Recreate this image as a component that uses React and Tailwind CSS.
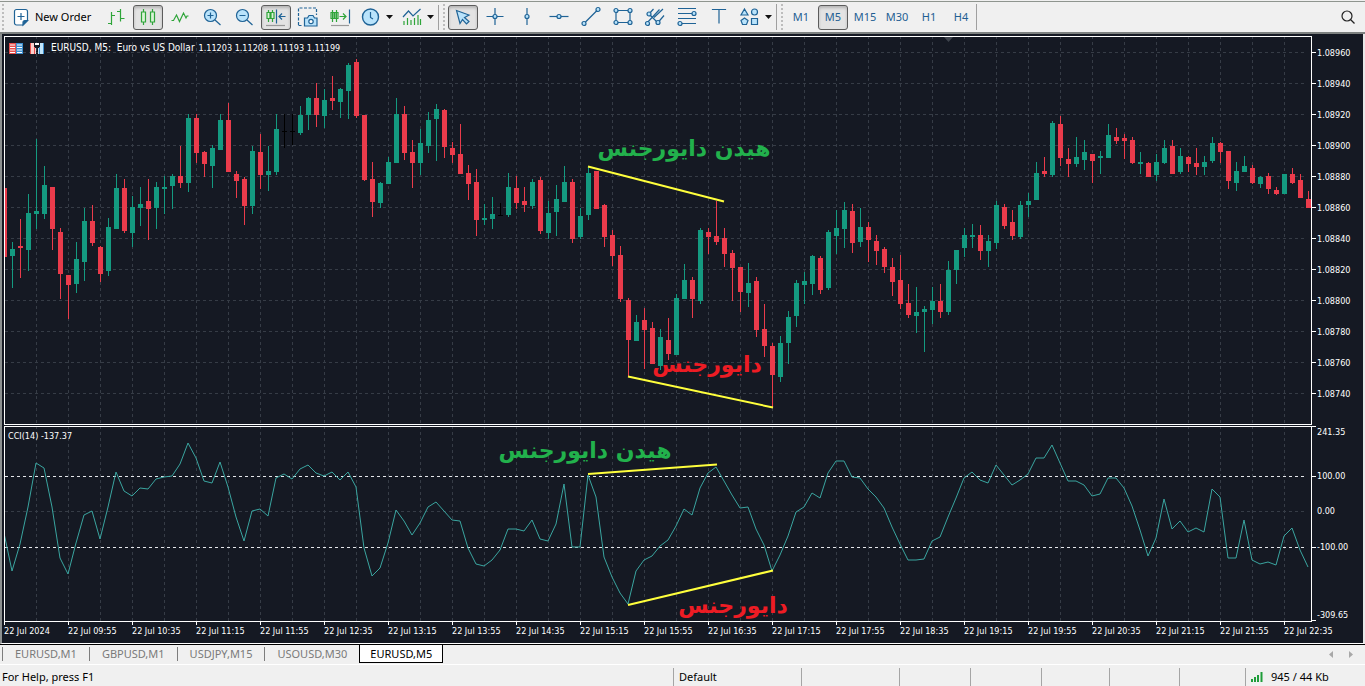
import React from "react";

const UP = "#149a80";
const DOWN = "#ea3b4b";
const STEP = 8;

// [direction, high, body top, body bottom, low]
const CANDLES = [
    ["d", 188, 188, 257, 257], ["u", 242, 249, 256, 288], ["d", 219, 246, 248, 278], ["u", 194, 213, 250, 271],
    ["u", 139, 211, 214, 229], ["u", 166, 185, 214, 219], ["d", 187, 187, 229, 250], ["d", 228, 232, 274, 299],
    ["d", 275, 275, 285, 319], ["u", 242, 259, 284, 293], ["u", 208, 221, 262, 281], ["d", 205, 221, 243, 246],
    ["d", 246, 247, 274, 282], ["u", 218, 227, 271, 276], ["u", 174, 188, 229, 229], ["d", 179, 188, 231, 233],
    ["u", 196, 207, 233, 247], ["u", 187, 204, 208, 226], ["d", 179, 201, 209, 240], ["u", 182, 187, 208, 229],
    ["u", 176, 187, 189, 214], ["u", 174, 176, 186, 209], ["d", 146, 176, 183, 188], ["u", 114, 118, 183, 192],
    ["d", 114, 118, 153, 163], ["d", 151, 152, 164, 177], ["u", 145, 148, 166, 188], ["u", 114, 120, 150, 150],
    ["d", 103, 120, 172, 172], ["d", 171, 174, 181, 198], ["d", 177, 179, 206, 225], ["u", 146, 151, 206, 214],
    ["d", 134, 152, 175, 189], ["u", 146, 171, 175, 191], ["u", 114, 129, 172, 175], ["x", 114, 131, 132, 148],
    ["x", 114, 131, 132, 145], ["u", 106, 115, 133, 135], ["u", 97, 98, 115, 130], ["d", 83, 98, 115, 127],
    ["u", 89, 100, 116, 128], ["d", 76, 98, 101, 110], ["u", 88, 89, 102, 118], ["u", 63, 65, 91, 119],
    ["d", 59, 62, 116, 118], ["d", 115, 115, 180, 181], ["d", 162, 179, 202, 217], ["u", 182, 183, 203, 208],
    ["u", 157, 162, 184, 184], ["u", 98, 114, 163, 163], ["d", 106, 114, 153, 160], ["d", 140, 152, 163, 188],
    ["u", 129, 143, 163, 175], ["u", 112, 120, 146, 153], ["u", 104, 109, 119, 161], ["d", 109, 110, 147, 158],
    ["d", 142, 148, 155, 163], ["d", 124, 154, 174, 174], ["d", 165, 173, 184, 200], ["d", 169, 182, 220, 236],
    ["u", 204, 218, 220, 225], ["u", 197, 214, 219, 229], ["x", 203, 215, 216, 216], ["u", 173, 187, 215, 217],
    ["d", 176, 188, 203, 209], ["d", 187, 201, 205, 212], ["u", 179, 182, 206, 209], ["d", 177, 180, 231, 234],
    ["u", 201, 213, 233, 239], ["u", 185, 199, 212, 236], ["u", 166, 182, 202, 202], ["d", 179, 182, 239, 243],
    ["u", 208, 216, 237, 239], ["u", 167, 173, 215, 220], ["d", 171, 171, 209, 209], ["d", 204, 205, 237, 247],
    ["d", 230, 235, 256, 266], ["d", 246, 255, 299, 302], ["d", 298, 300, 340, 376], ["u", 315, 322, 341, 341],
    ["d", 308, 320, 330, 369], ["d", 322, 328, 364, 364], ["u", 329, 337, 366, 370], ["d", 318, 340, 354, 360],
    ["u", 294, 298, 355, 355], ["u", 264, 280, 299, 299], ["d", 277, 280, 299, 318], ["u", 228, 230, 301, 304],
    ["d", 228, 232, 237, 254], ["d", 201, 236, 242, 245], ["d", 228, 238, 254, 267], ["d", 250, 253, 268, 301],
    ["d", 267, 267, 292, 312], ["u", 263, 283, 293, 307], ["d", 277, 281, 330, 337], ["d", 304, 329, 346, 357],
    ["d", 343, 346, 375, 407], ["u", 336, 343, 377, 382], ["u", 311, 317, 343, 364], ["u", 280, 283, 316, 327],
    ["u", 272, 281, 285, 304], ["u", 255, 256, 284, 295], ["d", 256, 258, 290, 294], ["u", 230, 232, 288, 290],
    ["u", 210, 228, 236, 254], ["u", 202, 210, 229, 248], ["d", 204, 211, 243, 253], ["u", 208, 227, 242, 247],
    ["d", 222, 227, 240, 262], ["d", 235, 241, 251, 265], ["d", 247, 249, 267, 273], ["d", 258, 267, 282, 296],
    ["d", 255, 280, 304, 309], ["d", 284, 303, 315, 318], ["u", 287, 312, 316, 333], ["u", 306, 309, 312, 352],
    ["u", 287, 301, 310, 324], ["d", 284, 301, 312, 318], ["u", 261, 270, 312, 315], ["u", 250, 250, 270, 284],
    ["u", 228, 235, 248, 257], ["u", 224, 235, 237, 248], ["d", 225, 235, 251, 260], ["u", 235, 241, 251, 267],
    ["u", 201, 205, 243, 249], ["d", 204, 207, 226, 229], ["d", 210, 222, 236, 240], ["u", 201, 205, 237, 239],
    ["u", 193, 201, 205, 217], ["u", 162, 173, 200, 200], ["d", 157, 171, 174, 177], ["u", 121, 123, 175, 177],
    ["d", 116, 124, 158, 166], ["d", 148, 159, 164, 177], ["u", 137, 157, 164, 167], ["u", 140, 152, 160, 170],
    ["d", 154, 154, 161, 183], ["u", 151, 156, 158, 174], ["u", 124, 135, 158, 158], ["d", 128, 137, 141, 144],
    ["d", 134, 138, 141, 159], ["d", 137, 140, 163, 164], ["u", 152, 162, 164, 174], ["d", 162, 163, 177, 177],
    ["u", 154, 162, 175, 181], ["u", 140, 148, 163, 164], ["d", 140, 146, 174, 174], ["u", 148, 156, 172, 174],
    ["d", 156, 157, 164, 172], ["d", 148, 163, 167, 175], ["u", 156, 162, 167, 175], ["u", 137, 143, 161, 163],
    ["d", 142, 143, 152, 163], ["d", 151, 151, 181, 189], ["u", 162, 171, 183, 191], ["u", 156, 166, 172, 172],
    ["d", 165, 168, 183, 184], ["u", 176, 177, 184, 188], ["d", 173, 176, 189, 194], ["d", 187, 190, 194, 195],
    ["u", 174, 174, 194, 194], ["d", 168, 174, 183, 184], ["d", 174, 180, 198, 198], ["d", 191, 199, 208, 208],
];

const CCI = [
    533, 571, 544, 507, 463, 468, 507, 558, 574, 543, 515, 511, 539, 507, 472, 491, 496, 488, 489, 479,
    477, 476, 464, 443, 458, 481, 483, 462, 487, 517, 541, 511, 509, 516, 478, 474, 479, 469, 465, 473,
    476, 472, 480, 472, 487, 548, 576, 568, 543, 510, 521, 535, 523, 507, 502, 511, 520, 521, 548, 564,
    566, 560, 550, 529, 529, 531, 520, 539, 541, 524, 484, 547, 547, 475, 497, 557, 577, 593, 604, 571,
    560, 556, 546, 540, 526, 509, 515, 488, 473, 467, 481, 495, 508, 507, 529, 545, 571, 555, 536, 512,
    507, 493, 498, 473, 461, 461, 477, 478, 489, 497, 508, 527, 544, 560, 560, 559, 541, 537, 517, 498,
    478, 472, 480, 483, 465, 475, 485, 480, 474, 458, 458, 445, 463, 481, 481, 485, 496, 494, 478, 478,
    488, 506, 530, 556, 538, 499, 529, 521, 532, 528, 532, 489, 497, 558, 558, 520, 560, 564, 562, 565,
    536, 528, 550, 567,
];

const PRICES = [
    "1.08960", "1.08940", "1.08920", "1.08900", "1.08880", "1.08860",
    "1.08840", "1.08820", "1.08800", "1.08780", "1.08760", "1.08740",
];

const TIMES = [
    "22 Jul 2024", "22 Jul 09:55", "22 Jul 10:35", "22 Jul 11:15", "22 Jul 11:55", "22 Jul 12:35", "22 Jul 13:15",
    "22 Jul 13:55", "22 Jul 14:35", "22 Jul 15:15", "22 Jul 15:55", "22 Jul 16:35", "22 Jul 17:15", "22 Jul 17:55",
    "22 Jul 18:35", "22 Jul 19:15", "22 Jul 19:55", "22 Jul 20:35", "22 Jul 21:15", "22 Jul 21:55", "22 Jul 22:35",
];

const TABS = ["EURUSD,M1", "GBPUSD,M1", "USDJPY,M15", "USOUSD,M30", "EURUSD,M5"];

const BLUE = "#1f6396";
const GREEN = "#2fa53a";
const SKY = "#b9e3fb";

function Icon({ children }) {
    return (
        <svg width="24" height="24" viewBox="0 0 24 24" fill="none" strokeWidth="1.2" className="shrink-0">
            {children}
        </svg>
    );
}

function Dot({ x, y }) {
    return <circle cx={x} cy={y} r="2" fill={SKY} stroke={BLUE} />;
}

const icons = {
    newOrder: (
        <Icon>
            <path d="M7.5 4.500h9a2 2 0 0 1 2 2v9l-4.500 4.500h-6.500a2 2 0 0 1-2-2v-11.500a2 2 0 0 1 2-2z" fill="#fff" stroke={BLUE} />
            <path d="M14 20v-2.500a2 2 0 0 1 2-2h2.500z" fill={BLUE} stroke={BLUE} />
            <path d="M12 8v7M8.500 11.500h7" stroke={BLUE} />
        </Icon>
    ),
    bars: (
        <Icon>
            <path d="M7.500 7v13M4 18.500h3.500M7.500 10.500h3.500M16.500 4v12.500M13 6.500h3.500M16.500 13.500h4" stroke={GREEN} />
        </Icon>
    ),
    candles: (
        <Icon>
            <path d="M7.500 4v3M7.500 17v3M16.500 4v3M16.500 17v3" stroke={GREEN} />
            <path d="M5.500 7h4v10h-4zM14.500 7h4v10h-4z" stroke={GREEN} fill="#d9f3d6" />
        </Icon>
    ),
    line: (
        <Icon>
            <path d="M3.500 15.500h2l3-5.500 3 6.500 4-8.500 2.500 5 1-2h1.500" stroke={GREEN} />
        </Icon>
    ),
    zoomIn: (
        <Icon>
            <circle cx="10.500" cy="10.500" r="6" fill={SKY} stroke={BLUE} />
            <path d="M15 15l5.500 5M10.500 7.500v6M7.500 10.500h6" stroke={BLUE} />
        </Icon>
    ),
    zoomOut: (
        <Icon>
            <circle cx="10.500" cy="10.500" r="6" fill={SKY} stroke={BLUE} />
            <path d="M15 15l5.500 5M7.500 10.500h6" stroke={BLUE} />
        </Icon>
    ),
    autoScroll: (
        <Icon>
            <path d="M4.500 5v12M8.500 5v12" stroke={GREEN} />
            <path d="M3 7.500h3v6h-3zM7 7.500h3v6h-3z" stroke={GREEN} fill="#d9f3d6" />
            <path d="M12.500 4.500v14M21.500 11.500h-6M18 8.500l-3 3 3 3" stroke={BLUE} />
            <path d="M2 20.500h19" stroke="#9a9a9a" />
        </Icon>
    ),
    camera: (
        <Icon>
            <path d="M2.500 20v-17h18v7M2.500 20.500h4" stroke={BLUE} strokeDasharray="3 1.500" />
            <path d="M8.500 13h3l1.500-2.500h4l1.500 2.500h2.500v8h-12.500z" fill={SKY} stroke={BLUE} />
            <circle cx="15" cy="16.500" r="2.200" stroke={BLUE} fill="#fff" />
        </Icon>
    ),
    shift: (
        <Icon>
            <path d="M4.500 5v12M8.500 5v12" stroke={GREEN} />
            <path d="M3 7.500h3v6h-3zM7 7.500h3v6h-3zM11.500 11.500h6M15 8.500l3 3-3 3" stroke={GREEN} />
            <path d="M21.500 4.500v14" stroke={BLUE} />
            <path d="M3 20.500h18" stroke="#9a9a9a" />
        </Icon>
    ),
    clock: (
        <Icon>
            <circle cx="11.500" cy="12" r="8" fill={SKY} stroke={BLUE} strokeWidth="1.400" />
            <path d="M11.500 7v5.500l2.500 1.500" stroke={BLUE} />
        </Icon>
    ),
    indicators: (
        <Icon>
            <path d="M3 12l5.500-6 4.500 5 7.500-7" stroke={BLUE} />
            <path d="M4 16v4M7.500 13v7M11 15v5M14.500 13v7M18 10v10M20.500 14v6" stroke={GREEN} />
        </Icon>
    ),
    cursor: (
        <Icon>
            <path d="M5.500 5.500l12.500 4.500-4.500 2.500 4.500 4-2.500 2.500-4-4.500-2.500 4z" fill={SKY} stroke={BLUE} />
        </Icon>
    ),
    cross: (
        <Icon>
            <path d="M12 3v17M3.500 11.500h17" stroke={BLUE} />
            <Dot x={12} y={11.5} />
        </Icon>
    ),
    vline: (
        <Icon>
            <path d="M12 3v17" stroke={BLUE} />
            <Dot x={12} y={11.5} />
        </Icon>
    ),
    hline: (
        <Icon>
            <path d="M2.500 11.500h19" stroke={BLUE} />
            <Dot x={12} y={11.5} />
        </Icon>
    ),
    trend: (
        <Icon>
            <path d="M5 18.500l14-14" stroke={BLUE} />
            <Dot x={5} y={18.5} />
            <Dot x={19} y={4.5} />
        </Icon>
    ),
    rect: (
        <Icon>
            <path d="M5 5.500h14v12h-14z" stroke={BLUE} />
            <Dot x={5} y={5.5} />
            <Dot x={19} y={5.5} />
            <Dot x={5} y={17.5} />
            <Dot x={19} y={17.5} />
        </Icon>
    ),
    channel: (
        <Icon>
            <path d="M3.500 18.500l13-14M6 9l4.500-5M15 17.500l6-7M11 12.500l9-8.500M6 9l9 9" stroke={BLUE} />
            <Dot x={4.5} y={18.5} />
            <Dot x={6} y={9} />
            <Dot x={15} y={17.5} />
        </Icon>
    ),
    fibo: (
        <Icon>
            <path d="M3 3.500h18M3 8.500h18M3 13.500h18M3 18.500h18" stroke={BLUE} />
            <Dot x={19} y={8.5} />
            <Dot x={5} y={18.5} />
        </Icon>
    ),
    text: (
        <Icon>
            <path d="M5.500 5v-0.500h13v0.500M12 4.500v14" stroke={BLUE} />
        </Icon>
    ),
    shapes: (
        <Icon>
            <path d="M6.500 4l3.500 6h-7zM13.500 13.500h6v6h-6zM6.500 13l3.500 2.500-1.500 4h-4l-1.500-4z" fill={SKY} stroke={BLUE} />
            <circle cx="16.500" cy="7" r="3" fill={SKY} stroke={BLUE} />
        </Icon>
    ),
};

const CHART_TOOLS = [
    ["bars", "Bar chart"], ["candles", "Candlesticks"], ["line", "Line chart"], ["zoomIn", "Zoom in"],
    ["zoomOut", "Zoom out"], ["autoScroll", "Auto scroll"], ["camera", "Screenshot"], ["shift", "Chart shift"],
];

const DRAW_TOOLS = [
    ["cursor", "Cursor"], ["cross", "Crosshair"], ["vline", "Vertical line"], ["hline", "Horizontal line"],
    ["trend", "Trend line"], ["rect", "Rectangle"], ["channel", "Channel"], ["fibo", "Fibonacci"], ["text", "Text"],
];

const PERIODS = ["M1", "M5", "M15", "M30", "H1", "H4"];

const PRESSED = "rounded-[3px] border border-[#5c5c5c] bg-[#e3e3e3] shadow-[inset_0_2px_3px_#b5b5b5]";

function ToolButton({ icon, label, pressed }) {
    return (
        <button
            aria-label={label}
            aria-pressed={pressed}
            className={`flex h-[25px] w-[30px] shrink-0 items-center justify-center ${pressed ? PRESSED : ""}`}
        >
            {icons[icon]}
        </button>
    );
}

function MenuButton({ icon, label }) {
    return (
        <button aria-label={label} className="flex h-[25px] w-9 shrink-0 items-center justify-between pl-[2px]">
            {icons[icon]}
            <svg width="7" height="4" viewBox="0 0 7 4">
                <path d="M0 0h7L3.500 4z" fill="#111" />
            </svg>
        </button>
    );
}

function Grip() {
    return <span className="h-[26px] w-[3px] shrink-0 border-l-2 border-dotted border-[#bdbdbd]" />;
}

function Toolbar() {
    return (
        <header className="mt-px flex h-[33px] shrink-0 items-center border-t border-b-2 border-t-[#8f958f] border-b-[#7d8180] pl-[2px]">
            <Grip />
            <div className="flex items-center gap-[2px] border-r border-[#a0a0a0] pr-1 pl-1">
                <button className="flex h-[25px] w-[90px] shrink-0 items-center gap-[2px] text-black">
                    {icons.newOrder}
                    New Order
                </button>
                {CHART_TOOLS.map(([icon, label]) => (
                    <ToolButton key={icon} icon={icon} label={label} pressed={icon === "candles" || icon === "autoScroll"} />
                ))}
                <div className="flex gap-[5px]">
                    <MenuButton icon="clock" label="Periods" />
                    <MenuButton icon="indicators" label="Indicators" />
                </div>
            </div>
            <div className="flex items-center gap-[2px] border-r border-[#a0a0a0] pr-1 pl-1">
                <Grip />
                {DRAW_TOOLS.map(([icon, label]) => (
                    <ToolButton key={icon} icon={icon} label={label} pressed={icon === "cursor"} />
                ))}
                <MenuButton icon="shapes" label="Shapes" />
            </div>
            <div className="flex items-center gap-[2px] border-r border-[#a0a0a0] pl-1">
                <Grip />
                {PERIODS.map((p) => (
                    <button
                        key={p}
                        className={`h-[25px] w-[30px] shrink-0 text-center text-[#1f5f93] ${p === "M5" ? PRESSED : ""}`}
                    >
                        {p}
                    </button>
                ))}
            </div>
            <button aria-label="Search" className="mr-[9px] ml-auto">
                <svg width="16" height="16" viewBox="0 0 16 16" fill="none" stroke="#222" strokeWidth="1.200">
                    <circle cx="7" cy="7" r="5" />
                    <path d="M10.500 10.500l4 4" />
                </svg>
            </button>
        </header>
    );
}

function Columns({ id }) {
    return (
        <>
            <defs>
                <pattern id={id} x="36" y="0" width="32" height="6" patternUnits="userSpaceOnUse">
                    <rect width="1" height="3" fill="#363c46" />
                </pattern>
            </defs>
            <rect x="5" width="100%" height="1200" fill={`url(#${id})`} />
        </>
    );
}

function Level({ y, color, dash = "3 3" }) {
    return (
        <svg x="0" y={y} width="100%" height="1" overflow="visible">
            <line x1="5" x2="100%" y1="0.5" y2="0.5" stroke={color} strokeDasharray={dash} />
        </svg>
    );
}

function Note({ x, y, color, children }) {
    return (
        <text x={x} y={y} fill={color} textAnchor="middle" direction="rtl" className="font-['DejaVu_Sans',sans-serif] text-[22px] font-bold">
            {children}
        </text>
    );
}

function PriceChart() {
    return (
        <svg width="100%" height="100%" className="block">
            <g transform="translate(-5 -37)">
                <Columns id="price-columns" />
                {PRICES.map((p, i) => (
                    <Level key={p} y={52 + i * 31} color="#363c46" />
                ))}
                <path d="M944 37h9l-4.500 5z" fill="#3f444d" />
                <g shapeRendering="crispEdges">
                    {CANDLES.map(([dir, high, top, bottom, low], i) => {
                        const color = dir === "u" ? UP : dir === "d" ? DOWN : "#000";
                        const x = 4 + i * STEP;
                        return (
                            <g key={i} fill={color}>
                                <rect x={x} y={high} width="1" height={low - high} />
                                <rect x={x - 2} y={top} width="5" height={bottom - top} />
                            </g>
                        );
                    })}
                </g>
                <g stroke="#ffff3c" strokeWidth="2">
                    <path d="M588 166.500L724 201.500" />
                    <path d="M628 376.500L773 407.500" />
                </g>
                <Note x={684} y={156} color="#22b14c">هیدن دایورجنس</Note>
                <Note x={707} y={372} color="#ed1c24">دایورجنس</Note>
            </g>
        </svg>
    );
}

function CciChart() {
    const points = CCI.map((y, i) => `${4 + i * STEP},${y}`).join(" ");
    return (
        <svg width="100%" height="100%" className="block">
            <g transform="translate(-5 -427)">
                <Columns id="cci-columns" />
                <Level y={511} color="#363c46" />
                <Level y={476} color="#e4e6ea" />
                <Level y={547} color="#e4e6ea" />
                <polyline points={points} fill="none" stroke="#3aa5a0" />
                <g stroke="#ffff3c" strokeWidth="2">
                    <path d="M588 474L717 464.500" />
                    <path d="M628 605L773 570.500" />
                </g>
                <Note x={585} y={458} color="#22b14c">هیدن دایورجنس</Note>
                <Note x={733} y={613} color="#ed1c24">دایورجنس</Note>
            </g>
        </svg>
    );
}

function AxisLabel({ tick = true, className, children }) {
    return (
        <div className={`flex gap-[1px] ${className}`}>
            <span className={`h-px w-1 ${tick ? "bg-white" : ""}`} />
            {children}
        </div>
    );
}

function ChartWindow() {
    return (
        <main className="flex min-h-0 flex-1 flex-col border-r-2 border-b border-l-2 border-r-[#e8e8e8] border-b-white border-l-[#8c9090] bg-[#151923] pt-[2px] pl-[2px] font-['DejaVu_Sans_Condensed','DejaVu_Sans',sans-serif] text-[9px] leading-3 text-white">
            <div className="flex min-h-0 flex-1">
                <section className="relative min-w-0 flex-1 overflow-hidden border border-white">
                    <PriceChart />
                    <div className="absolute top-[5px] left-1 flex items-center gap-[7px]">
                        <svg width="14" height="11" viewBox="0 0 14 11">
                            <path d="M0 0h7v11H0z" fill="#e8504e" />
                            <path d="M7 0h7v11H7z" fill="#3d8fd0" />
                            <path d="M1 2h5M1 4.500h5M1 7h5M1 9.500h5M8 2h5M8 4.500h5M8 7h5M8 9.500h5" stroke="#fff" />
                        </svg>
                        <svg width="14" height="11" viewBox="0 0 14 11">
                            <path d="M0 0h4v5h2v6H0z" fill="#fbd0cd" />
                            <path d="M14 0h-4v5H8v6h6z" fill="#c2e6fb" />
                            <path d="M0 0h1v11H0zM4 4h1v7H4z" fill="#e8504e" />
                            <path d="M13 0h1v11h-1zM9 4h1v7H9z" fill="#3d8fd0" />
                            <path d="M5 0h4v2H5z" fill="#fff" />
                        </svg>
                        <h1 className="flex items-baseline gap-1 whitespace-pre">
                            <span className="text-[10px]">EURUSD, M5:  Euro vs US Dollar</span>
                            <span>1.11203 1.11208 1.11193 1.11199</span>
                        </h1>
                    </div>
                </section>
                <div className="w-[51px] pt-[1px]">
                    {PRICES.map((p) => (
                        <AxisLabel key={p} className="h-[31px] items-center">{p}</AxisLabel>
                    ))}
                </div>
            </div>
            <div className="mt-px flex h-[196px] shrink-0">
                <section className="relative min-w-0 flex-1 overflow-hidden border border-white">
                    <CciChart />
                    <h2 className="absolute top-[3px] left-[3px]">CCI(14) -137.37</h2>
                </section>
                <div className="w-[51px]">
                    <AxisLabel className="h-3 items-start">241.35</AxisLabel>
                    <AxisLabel className="mt-8 h-3 items-center">100.00</AxisLabel>
                    <AxisLabel tick={false} className="mt-[23px] h-3 items-center">0.00</AxisLabel>
                    <AxisLabel className="mt-6 h-3 items-center">-100.00</AxisLabel>
                    <AxisLabel className="mt-14 h-3 items-end">-309.65</AxisLabel>
                </div>
            </div>
            <div className="flex h-[21px] shrink-0 overflow-hidden">
                {TIMES.map((t) => (
                    <div key={t} className="w-16 shrink-0 whitespace-nowrap">
                        <span className="block h-[3px] w-px bg-white" />
                        {t}
                    </div>
                ))}
            </div>
        </main>
    );
}

function TabBar() {
    return (
        <nav className="flex h-[21px] shrink-0 items-start justify-between border-t border-b border-t-black border-b-white">
            <div className="flex pl-[2px]">
                {TABS.map((t, i) => (
                    <button
                        key={t}
                        className={
                            i === 4
                                ? "h-[18px] w-[84px] border border-t-0 border-black bg-white text-black"
                                : "my-[2px] h-[14px] border-l border-[#7d7d7d] px-3 leading-[14px] text-[#7a7a7a]"
                        }
                    >
                        {t}
                    </button>
                ))}
            </div>
            <div className="flex h-[18px] items-center gap-4 pr-3">
                <button aria-label="Scroll left">
                    <svg width="4" height="7" viewBox="0 0 4 7"><path d="M4 0v7L0 3.500z" fill="#a8a8a8" /></svg>
                </button>
                <button aria-label="Scroll right">
                    <svg width="4" height="7" viewBox="0 0 4 7"><path d="M0 0v7l4-3.500z" fill="#a8a8a8" /></svg>
                </button>
            </div>
        </nav>
    );
}

function StatusBar() {
    const cell = "h-[18px] border-l border-[#a5a5a5] shrink-0";
    return (
        <footer className="flex h-[21px] shrink-0 items-end leading-[18px] text-black">
            <span className="flex-1 pl-[2px]">For Help, press F1</span>
            <span className={`${cell} w-32 pl-[5px]`}>Default</span>
            <span className={`${cell} w-[98px]`} />
            <span className={`${cell} w-[71px]`} />
            <span className={`${cell} w-[71px]`} />
            <span className={`${cell} w-[68px]`} />
            <span className={`${cell} w-[70px]`} />
            <span className={`${cell} w-[66px]`} />
            <span className={`${cell} flex w-[120px] items-center gap-2 pl-[5px]`}>
                <svg width="12" height="10" viewBox="0 0 12 10">
                    <path d="M1 7v3M4 5v5M7 3v7M10.500 0v10" stroke="#1f9d3a" strokeWidth="2" />
                </svg>
                945 / 44 Kb
            </span>
        </footer>
    );
}

export default function App() {
    return (
        <div className="flex h-screen flex-col overflow-hidden bg-[#f0f0f0] font-['Noto_Sans','Open_Sans',sans-serif] text-[11px] leading-4">
            <Toolbar />
            <ChartWindow />
            <TabBar />
            <StatusBar />
        </div>
    );
}
